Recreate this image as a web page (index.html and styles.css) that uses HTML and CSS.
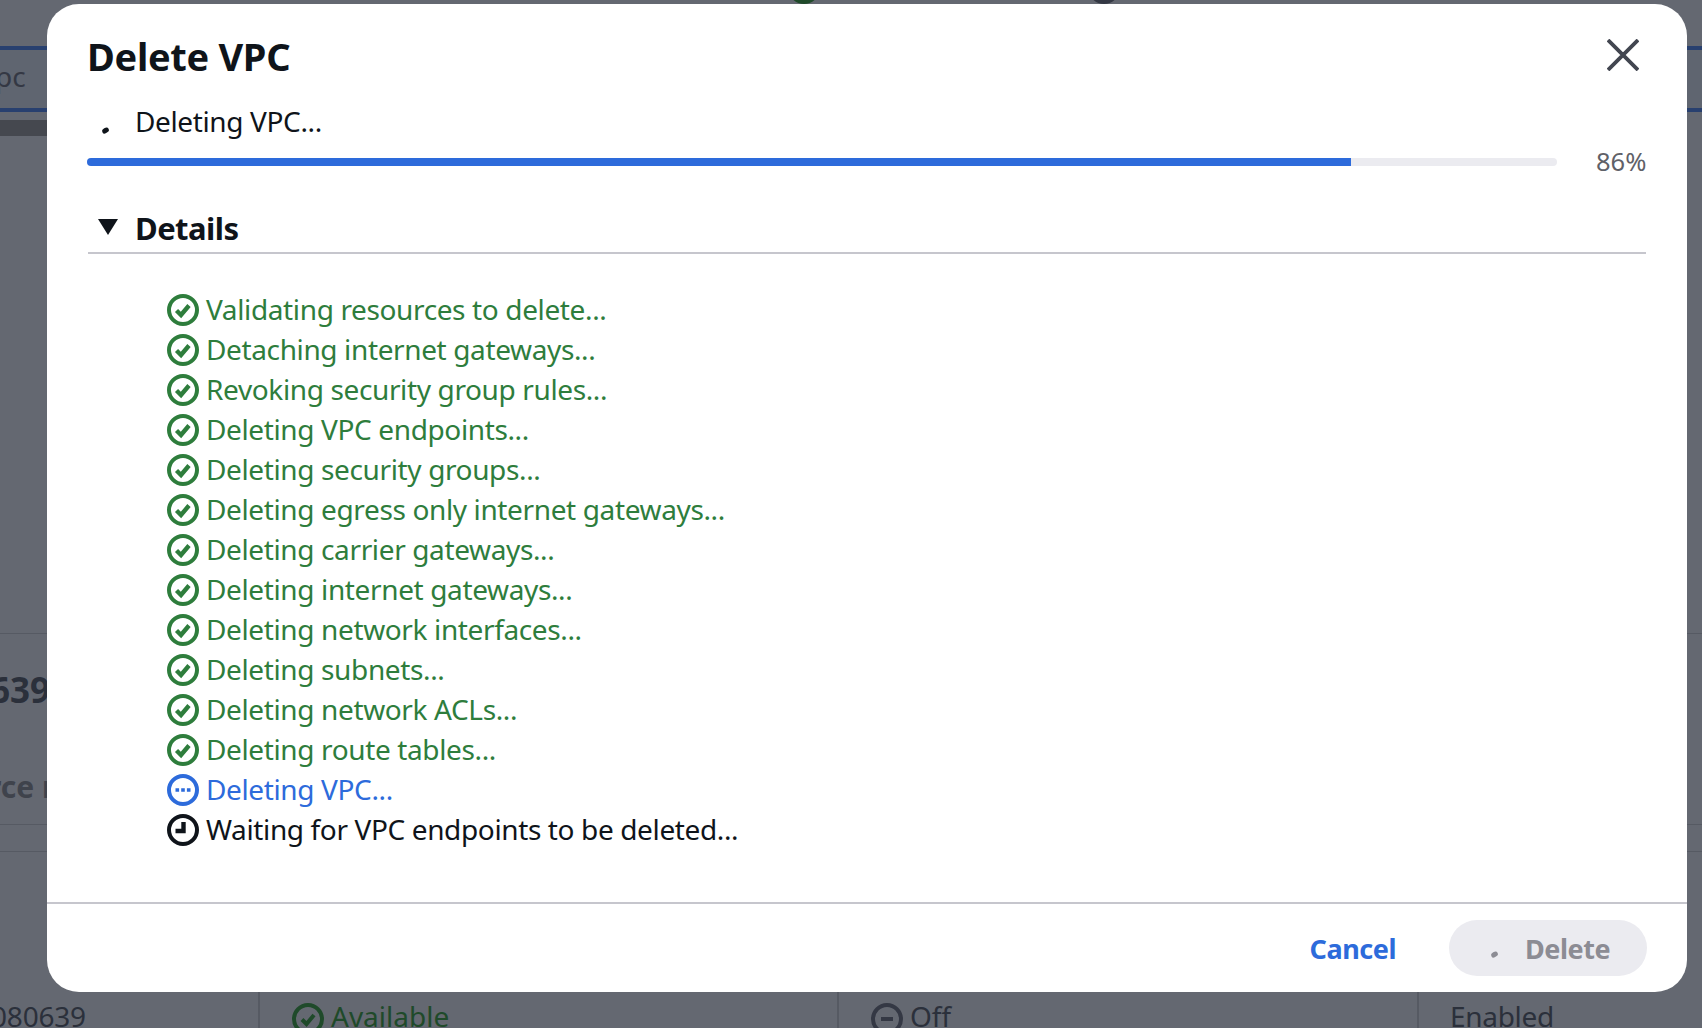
FILE: index.html
```html
<!DOCTYPE html>
<html lang="en">
<head>
<meta charset="utf-8">
<title>Delete VPC</title>
<link rel="stylesheet" href="styles.css">
</head>
<body>
<div class="page">
  <div class="top-dots"><span class="dot dot-green"></span><span class="dot dot-dark"></span></div>
  <div class="tabs"><span class="tab-text">pc</span></div>
  <div class="dark-strip"></div>
  <div class="summary">
    <div class="summary-id">639</div>
    <div class="summary-label">rce r</div>
  </div>
  <div class="table-head"></div>
  <div class="table-row">
    <div class="cell cell-id">080639</div>
    <div class="cell cell-state">
      <svg class="bg-icon" viewBox="0 0 32 32"><circle cx="16" cy="16" r="14" fill="none" stroke="#1f4a2a" stroke-width="4"/><path d="M10 16.5l4.5 4.5 7.5-9" fill="none" stroke="#1f4a2a" stroke-width="4"/></svg>
      <span class="state-ok">Available</span>
    </div>
    <div class="cell cell-off">
      <svg class="bg-icon" viewBox="0 0 32 32"><circle cx="16" cy="16" r="14" fill="none" stroke="#343844" stroke-width="4"/><path d="M10 16h12" stroke="#343844" stroke-width="4"/></svg>
      <span>Off</span>
    </div>
    <div class="cell cell-enabled">Enabled</div>
  </div>
</div>

<div class="modal" role="dialog" aria-label="Delete VPC">
  <header class="modal-head">
    <h1 class="modal-title">Delete VPC</h1>
    <svg class="close" viewBox="0 0 32 32"><path d="M1 1l30 30M31 1L1 31" stroke="#424650" stroke-width="3.8" fill="none"/></svg>
  </header>
  <div class="status">
    <span class="spin-slot"><span class="spin"></span></span>
    <span>Deleting VPC...</span>
  </div>
  <div class="progress-row">
    <div class="track"><div class="fill" style="width:86%"></div></div>
    <span class="percent">86%</span>
  </div>
  <div class="details-head">
    <svg class="caret" viewBox="0 0 20 16"><path d="M0 0h20L10 16z" fill="#0f141a"/></svg>
    <span>Details</span>
  </div>
  <ul class="steps">
    <li class="step done"><svg class="ico" viewBox="0 0 32 32"><circle cx="16" cy="16" r="14"/><path class="tick" d="M9.5 16.5l4.5 4.5 8-9.5"/></svg><span class="step-text">Validating resources to delete...</span></li>
    <li class="step done"><svg class="ico" viewBox="0 0 32 32"><circle cx="16" cy="16" r="14"/><path class="tick" d="M9.5 16.5l4.5 4.5 8-9.5"/></svg><span class="step-text">Detaching internet gateways...</span></li>
    <li class="step done"><svg class="ico" viewBox="0 0 32 32"><circle cx="16" cy="16" r="14"/><path class="tick" d="M9.5 16.5l4.5 4.5 8-9.5"/></svg><span class="step-text">Revoking security group rules...</span></li>
    <li class="step done"><svg class="ico" viewBox="0 0 32 32"><circle cx="16" cy="16" r="14"/><path class="tick" d="M9.5 16.5l4.5 4.5 8-9.5"/></svg><span class="step-text">Deleting VPC endpoints...</span></li>
    <li class="step done"><svg class="ico" viewBox="0 0 32 32"><circle cx="16" cy="16" r="14"/><path class="tick" d="M9.5 16.5l4.5 4.5 8-9.5"/></svg><span class="step-text">Deleting security groups...</span></li>
    <li class="step done"><svg class="ico" viewBox="0 0 32 32"><circle cx="16" cy="16" r="14"/><path class="tick" d="M9.5 16.5l4.5 4.5 8-9.5"/></svg><span class="step-text">Deleting egress only internet gateways...</span></li>
    <li class="step done"><svg class="ico" viewBox="0 0 32 32"><circle cx="16" cy="16" r="14"/><path class="tick" d="M9.5 16.5l4.5 4.5 8-9.5"/></svg><span class="step-text">Deleting carrier gateways...</span></li>
    <li class="step done"><svg class="ico" viewBox="0 0 32 32"><circle cx="16" cy="16" r="14"/><path class="tick" d="M9.5 16.5l4.5 4.5 8-9.5"/></svg><span class="step-text">Deleting internet gateways...</span></li>
    <li class="step done"><svg class="ico" viewBox="0 0 32 32"><circle cx="16" cy="16" r="14"/><path class="tick" d="M9.5 16.5l4.5 4.5 8-9.5"/></svg><span class="step-text">Deleting network interfaces...</span></li>
    <li class="step done"><svg class="ico" viewBox="0 0 32 32"><circle cx="16" cy="16" r="14"/><path class="tick" d="M9.5 16.5l4.5 4.5 8-9.5"/></svg><span class="step-text">Deleting subnets...</span></li>
    <li class="step done"><svg class="ico" viewBox="0 0 32 32"><circle cx="16" cy="16" r="14"/><path class="tick" d="M9.5 16.5l4.5 4.5 8-9.5"/></svg><span class="step-text">Deleting network ACLs...</span></li>
    <li class="step done"><svg class="ico" viewBox="0 0 32 32"><circle cx="16" cy="16" r="14"/><path class="tick" d="M9.5 16.5l4.5 4.5 8-9.5"/></svg><span class="step-text">Deleting route tables...</span></li>
    <li class="step active"><svg class="ico" viewBox="0 0 32 32"><circle cx="16" cy="16" r="14"/><path class="dots" d="M8.5 16h3.6M14.2 16h3.6M19.9 16h3.6"/></svg><span class="step-text">Deleting VPC...</span></li>
    <li class="step waiting"><svg class="ico" viewBox="0 0 32 32"><circle cx="16" cy="16" r="14"/><path class="tick" d="M16.5 8v9H8.5"/></svg><span class="step-text">Waiting for VPC endpoints to be deleted...</span></li>
  </ul>
  <footer class="modal-foot">
    <span class="cancel">Cancel</span>
    <span class="delete-btn"><span class="spin-slot-sm"><span class="spin spin-grey"></span></span>Delete</span>
  </footer>
</div>
</body>
</html>
```
FILE: styles.css
```css
* { box-sizing: border-box; }
html, body { margin: 0; height: 100%; }
body {
  position: relative;
  width: 1702px;
  height: 1028px;
  overflow: hidden;
  background: #646871;
  font-family: "Noto Sans", "Open Sans", sans-serif;
  color: #0f141a;
}
.page { height: 1028px; overflow: hidden; display: flex; flex-direction: column; color: #2b303b; }
.page > * { flex: none; }
.top-dots { height: 46px; display: flex; padding-left: 788px; gap: 268px; }
.dot { width: 32px; height: 32px; border-radius: 50%; margin-top: -28px; }
.dot-green { background: #1f4a2a; }
.dot-dark { background: #343844; }
.tabs {
  height: 66px;
  border-top: 4px solid #28406f;
  border-bottom: 4px solid #28406f;
  background: #5f6570;
  font-size: 28px;
  display: flex;
  align-items: center;
  color: #343844;
}
.tab-text { margin-left: -5px; margin-top: -6px; }
.dark-strip { height: 16px; width: 100px; margin-top: 8px; background: #45484f; }
.summary {
  margin-top: 497px;
  height: 192px;
  border-top: 1px solid #565a63;
  border-bottom: 1px solid #565a63;
  display: flex;
  flex-direction: column;
}
.summary-id { font-size: 35px; line-height: 46px; font-weight: 700; margin: 33px 0 0 -10px; }
.summary-label { font-size: 30px; line-height: 40px; font-weight: 700; margin: 54px 0 0 -12px; color: #3f434c; white-space: nowrap; }
.table-head { height: 27px; border-bottom: 1px solid #565a63; }
.table-row { height: 177px; display: flex; font-size: 28px; }
.cell { border-right: 2px solid #565a63; display: flex; align-items: flex-start; gap: 7px; padding-top: 145px; white-space: nowrap; }
.cell-id { width: 260px; margin-left: -9px; padding-left: 0; flex: none; width: 269px; letter-spacing: -0.2px; }
.cell-state { width: 579px; padding-left: 32px; }
.cell-off { width: 580px; padding-left: 32px; }
.cell-enabled { border-right: 0; padding-left: 31px; letter-spacing: -0.3px; }
.bg-icon { width: 32px; height: 32px; flex: none; margin-top: 6px; }
.state-ok { color: #1f4a2a; }

.modal {
  position: absolute;
  left: 47px;
  top: 4px;
  width: 1640px;
  height: 988px;
  background: #fff;
  border-radius: 32px;
  display: flex;
  flex-direction: column;
  font-size: 28px;
  letter-spacing: -0.37px;
}
.modal-head { display: flex; justify-content: space-between; align-items: flex-start; height: 91px; padding: 0 48px 0 40px; }
.modal-title { margin: 33px 0 0; font-size: 38px; font-weight: 700; line-height: 1; letter-spacing: -0.3px; }
.close { width: 32px; height: 32px; margin-top: 35px; }
.status { height: 40px; display: flex; align-items: center; padding-left: 41px; margin-top: 6px; }
.spin-slot { width: 47px; height: 40px; position: relative; flex: none; }
.spin { position: absolute; left: 14px; top: 27px; width: 7px; height: 5px; background: #0f141a; border-radius: 50% 50% 40% 40%; transform: rotate(-30deg); }
.spin-grey { left: 12px; top: 24px; background: #8c8c94; }
.progress-row { display: flex; align-items: center; margin-top: 5px; padding: 0 40px 0 40px; height: 32px; }
.track { width: 1470px; height: 8px; flex: none; border-radius: 4px; background: #ebebf0; overflow: hidden; }
.fill { height: 100%; background: #2d6bdb; }
.percent { margin-left: 39px; font-size: 25.5px; color: #5f6168; margin-top: -2px; letter-spacing: 0; }
.details-head {
  display: flex;
  align-items: center;
  margin: 26px 41px 0 41px;
  height: 50px;
  padding-left: 10px;
  border-bottom: 2px solid #c6c6cd;
  font-size: 31px;
  font-weight: 700;
  gap: 17px;
  letter-spacing: -0.55px;
}
.caret { width: 20px; height: 16px; flex: none; margin-top: -2px; }
.steps { list-style: none; margin: 36px 0 0; padding: 0 0 0 120px; flex: 1; }
.step { height: 40px; display: flex; align-items: center; gap: 7px; white-space: nowrap; }
.step-text { margin-top: -2px; }
.ico { width: 32px; height: 32px; flex: none; fill: none; stroke: currentColor; stroke-width: 4; }
.tick { stroke-width: 4.4; }
.done { color: #2e7d3c; }
.active { color: #2d6bdb; }
.waiting { color: #0f141a; }
.dots { stroke-width: 3.4; }
.modal-foot {
  height: 90px;
  border-top: 2px solid #c6c6cd;
  display: flex;
  align-items: center;
  justify-content: flex-end;
  padding: 0 40px 0 0;
  font-size: 27px;
  font-weight: 700;
  letter-spacing: -0.45px;
}
.cancel { color: #2d6bdb; margin-right: 53px; }
.delete-btn {
  width: 198px;
  height: 56px;
  border-radius: 28px;
  background: #ebebf0;
  color: #8c8c94;
  display: flex;
  align-items: center;
  padding-left: 76px;
  position: relative;
}
.spin-slot-sm { position: absolute; left: 30px; top: 8px; width: 30px; height: 40px; }
```
